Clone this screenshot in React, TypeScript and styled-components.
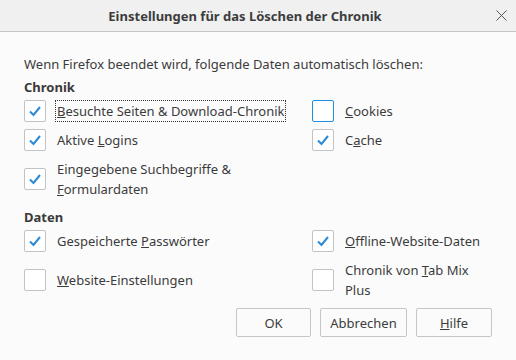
import React from 'react'
import styled, { createGlobalStyle } from 'styled-components'

const GlobalStyle = createGlobalStyle`
  html, body {
    margin: 0;
    padding: 0;
    background: #fbfbfb;
  }
  body {
    font-family: 'Noto Sans', 'Open Sans', sans-serif;
    font-size: 13px;
    color: #3b3b3b;
  }
`

type Item = {
  label: React.ReactNode
  checked?: boolean
  focused?: boolean
  active?: boolean
}

const chronik: Item[][] = [
  [
    { label: <><u>B</u>esuchte Seiten &amp; Download-Chronik</>, checked: true, focused: true },
    { label: <><u>C</u>ookies</>, active: true },
  ],
  [
    { label: <>Aktive <u>L</u>ogins</>, checked: true },
    { label: <>C<u>a</u>che</>, checked: true },
  ],
  [{ label: <>Eingegebene Suchbegriffe &amp;<br /><u>F</u>ormulardaten</>, checked: true }],
]

const daten: Item[][] = [
  [
    { label: <>Gespeicherte <u>P</u>asswörter</>, checked: true },
    { label: <><u>O</u>ffline-Website-Daten</>, checked: true },
  ],
  [
    { label: <><u>W</u>ebsite-Einstellungen</> },
    { label: <>Chronik von <u>T</u>ab Mix<br />Plus</> },
  ],
]

const Check = ({ item }: { item: Item }) => (
  <CheckRow>
    <Box $active={item.active}>
      {item.checked && (
        <svg width="14" height="12" viewBox="0 0 14 12">
          <path d="M2 6.5 L5.5 10 L12 2" fill="none" stroke="#2a8ad6" strokeWidth="2" />
        </svg>
      )}
    </Box>
    <Label $focused={item.focused}>{item.label}</Label>
  </CheckRow>
)

const Section = ({ title, rows }: { title: string; rows: Item[][] }) => (
  <>
    <Heading>{title}</Heading>
    {rows.map((row, i) => (
      <Grid key={i}>
        {row.map((item, j) => (
          <Check key={j} item={item} />
        ))}
      </Grid>
    ))}
  </>
)

const App = () => {
  return (
    <Dialog>
      <GlobalStyle />
      <TitleBar>
        <Title>Einstellungen für das Löschen der Chronik</Title>
        <Close>
          <svg width="11" height="11" viewBox="0 0 11 11">
            <path d="M0.5 0.5 L10.5 10.5 M10.5 0.5 L0.5 10.5" stroke="#555" strokeWidth="1" />
          </svg>
        </Close>
      </TitleBar>
      <Body>
        <Intro>Wenn Firefox beendet wird, folgende Daten automatisch löschen:</Intro>
        <Section title="Chronik" rows={chronik} />
        <Section title="Daten" rows={daten} />
        <Buttons>
          <Button $w={75}>OK</Button>
          <Button $w={87}>Abbrechen</Button>
          <Button $w={76}><u>H</u>ilfe</Button>
        </Buttons>
      </Body>
    </Dialog>
  )
}

export default App

const Dialog = styled.div`
  width: 516px;
  height: 360px;
  background: #fbfbfb;
  overflow: hidden;
`

const TitleBar = styled.div`
  position: relative;
  box-sizing: border-box;
  height: 32px;
  padding-right: 26px;
  background: #f0f0f0;
  border-bottom: 1px solid #c4c4c4;
  display: flex;
  align-items: center;
  justify-content: center;
`

const Title = styled.div`
  font-weight: 700;
  font-size: 13px;
  color: #3c3c3c;
`

const Close = styled.div`
  position: absolute;
  right: 9px;
  top: 10px;
  width: 11px;
  height: 11px;
  display: flex;
`

const Body = styled.div`
  padding: 0 24px;
  display: flex;
  flex-direction: column;
`

const Intro = styled.div`
  margin-top: 22px;
  line-height: 20px;
`

const Heading = styled.div`
  margin-top: 3px;
  font-weight: 700;
  line-height: 20px;
  color: #3a3a3a;
`

const Grid = styled.div`
  display: grid;
  grid-template-columns: 288px 1fr;
  margin-top: 3px;
  margin-bottom: 4px;
`

const CheckRow = styled.div`
  display: flex;
  align-items: center;
  min-height: 22px;
`

const Box = styled.div<{ $active?: boolean }>`
  box-sizing: border-box;
  flex: none;
  width: 22px;
  height: 22px;
  border: 1px solid ${(p) => (p.$active ? '#1b8ee6' : '#c3c3c3')};
  border-radius: 2px;
  background: #fff;
  display: flex;
  align-items: center;
  justify-content: center;
`

const Label = styled.div<{ $focused?: boolean }>`
  margin-left: 9px;
  line-height: 20px;
  padding: 0 1px;
  border: 1px dotted ${(p) => (p.$focused ? '#333' : 'transparent')};
`

const Buttons = styled.div`
  display: flex;
  justify-content: flex-end;
  gap: 9px;
  margin-top: 3px;
`

const Button = styled.button<{ $w: number }>`
  width: ${(p) => p.$w}px;
  height: 29px;
  background: #fbfbfb;
  border: 1px solid #c6c6c6;
  border-radius: 2px;
  font-family: inherit;
  font-size: 13px;
  color: #3b3b3b;
  padding: 0;
`
